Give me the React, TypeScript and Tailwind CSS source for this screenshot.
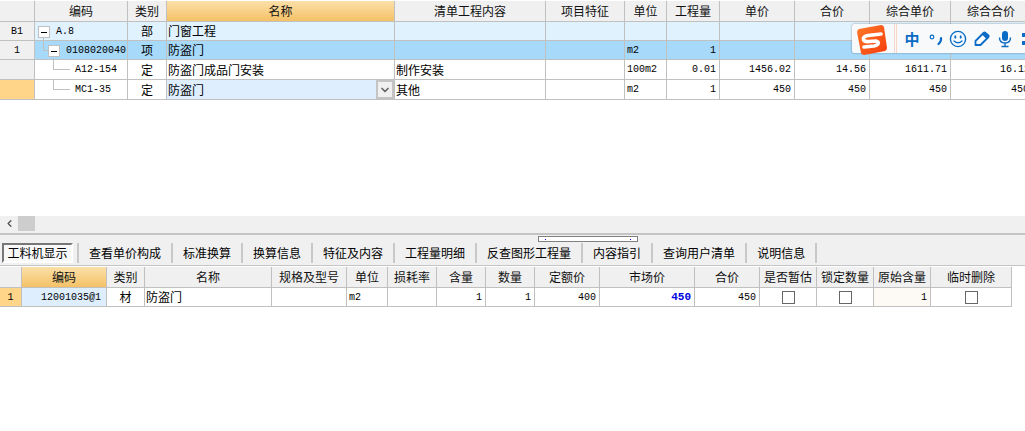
import React from "react";
import { ChevronDown, ChevronLeft } from "lucide-react";

const cjk = "font-['Noto_Sans_CJK_SC','Liberation_Sans',sans-serif]";
const topGrid = "grid grid-cols-[35px_93px_39px_228px_151px_79px_42px_53px_75px_75px_81px_81px]";
const botGrid = "grid grid-cols-[22px_85px_38px_127px_75px_41px_49px_49px_49px_65px_95px_65px_57px_57px_57px_81px]";
const line = "border-r border-b border-[#c0c0c0]";
const mono = "font-['Liberation_Mono',monospace] text-[10px]";

type CellProps = { children?: React.ReactNode; className?: string };
const Head = ({ children, className = "bg-[#f0f0f0]" }: CellProps) => (
  <div className={`${line} ${className} flex items-center justify-center text-[12px] text-[#111] overflow-hidden whitespace-nowrap`}>{children}</div>
);
const Text = ({ children, className = "" }: CellProps) => (
  <div className={`${line} ${className} flex items-center pl-px text-[12px] text-black overflow-hidden whitespace-nowrap`}>{children}</div>
);
const Tree = ({ children, className = "" }: CellProps) => (
  <div className={`${line} ${className} relative flex items-center pl-px text-[12px] text-black whitespace-nowrap`}>{children}</div>
);
const Center = ({ children, className = "" }: CellProps) => (
  <div className={`${line} ${className} flex items-center justify-center text-[12px] text-black overflow-hidden`}>{children}</div>
);
const Num = ({ children, className = "" }: CellProps) => (
  <div className={`${line} ${className} flex items-center justify-end pr-[3px] ${mono} text-black overflow-hidden whitespace-nowrap`}>{children}</div>
);
const Cut = ({ children, className = "" }: CellProps) => (
  <div className={`${line} ${className} flex items-center ${mono} text-black overflow-hidden whitespace-nowrap`}>{children}</div>
);
const Unit = ({ children, className = "" }: CellProps) => (
  <div className={`${line} ${className} flex items-center pl-[2px] ${mono} text-black overflow-hidden`}>{children}</div>
);
const Mono = ({ children, className = "" }: { children: React.ReactNode; className?: string }) => (
  <span className={`${mono} ${className}`}>{children}</span>
);
const Minus = ({ className = "" }: { className?: string }) => (
  <span className={`absolute w-[12px] h-[12px] bg-white border border-[#c0c0c0] flex items-center justify-center ${className}`}>
    <span className="w-[6px] h-px bg-black" />
  </span>
);

const tabs = ["查看单价构成", "标准换算", "换算信息", "特征及内容", "工程量明细", "反查图形工程量", "内容指引", "查询用户清单", "说明信息"];
const Box = () => <span className="w-[13px] h-[13px] border border-[#666] bg-white" />;

function ImeBar() {
  return (
    <div className="absolute left-[852px] top-[24px] w-[180px] h-[29px] bg-[#f7f9fb] rounded-[2px] shadow-[0_0_2px_rgba(0,0,0,0.45)] flex items-center">
      <svg width="32" height="32" viewBox="0 0 32 32" className="ml-[4px] mt-[2px] shrink-0">
        <defs>
          <linearGradient id="sg" x1="0" y1="0" x2="1" y2="1">
            <stop offset="0" stopColor="#ff7a2a" />
            <stop offset="1" stopColor="#f53c0c" />
          </linearGradient>
        </defs>
        <path d="M3 5 L25 1 Q27 1 28 3 L31 24 Q31 26 29 27 L8 31 Q6 31 5 29 L1 8 Q1 6 3 5Z" fill="url(#sg)" />
        <path d="M25 10 L12 11.5 Q6.5 12.5 7.5 15.5 Q8.5 18 13 17.5 L20 17 Q23 17.5 22 20 Q21 21.5 18 22 L8 23" fill="none" stroke="#fff" strokeWidth="3.6" strokeLinecap="round" strokeLinejoin="round" />
      </svg>
      <span className="ml-[6px] h-full w-[3px] border-x border-[#f8d5c6] shrink-0" />
      <span className="ml-[5px] w-[20px] text-center text-[15px] leading-none font-bold text-[#0a6cc4]">中</span>
      <svg width="16" height="16" viewBox="0 0 16 16" className="ml-[6px] shrink-0">
        <circle cx="4" cy="6" r="1.8" fill="none" stroke="#0a6cc4" strokeWidth="1.2" />
        <path d="M13 7 Q13.5 10.5 10.5 13" fill="none" stroke="#0a6cc4" strokeWidth="2.2" strokeLinecap="round" />
      </svg>
      <svg width="18" height="18" viewBox="0 0 18 18" className="ml-[5px] shrink-0">
        <circle cx="9" cy="9" r="7.6" fill="#f7fbff" stroke="#0a6cc4" strokeWidth="1.4" />
        <ellipse cx="6.3" cy="7" rx="1" ry="1.7" fill="#0a6cc4" />
        <ellipse cx="11.7" cy="7" rx="1" ry="1.7" fill="#0a6cc4" />
        <path d="M5 11 Q9 14.5 13 11" fill="none" stroke="#0a6cc4" strokeWidth="1.3" strokeLinecap="round" />
      </svg>
      <svg width="16" height="16" viewBox="0 0 16 16" className="ml-[7px] shrink-0">
        <path d="M1.5 10 L9.5 2 Q10.5 1 11.5 2 L14.5 4.5 Q15 5.5 14 6.5 L6.5 14 L1.5 14Z" fill="#fff" stroke="#0a6cc4" strokeWidth="1.8" strokeLinejoin="round" />
        <path d="M9.5 2 Q10.5 1 11.5 2 L14.5 4.5 Q15 5.5 14 6.5 L12.5 8 L8 3.5Z" fill="#0a6cc4" />
      </svg>
      <svg width="14" height="18" viewBox="0 0 14 18" className="ml-[8px] shrink-0">
        <rect x="4" y="1" width="6" height="10" rx="3" fill="#0a6cc4" />
        <path d="M1.5 7.5 Q1.5 13 7 13 Q12.5 13 12.5 7.5 M7 13 V16 M3.5 16.5 H10.5" fill="none" stroke="#0a6cc4" strokeWidth="1.4" />
      </svg>
      <span className="ml-[10px] w-[4px] h-[12px] border-y-[4px] border-[#0a6cc4] shrink-0" />
    </div>
  );
}

export default function App() {
  return (
    <div className={`relative w-[1025px] h-[431px] bg-white overflow-hidden ${cjk}`}>
      <div className="h-[215px] pt-px overflow-hidden">
        <div className={`${topGrid} w-[1100px] grid-rows-[21px_19px_19px_20px_20px]`}>
          <Head />
          <Head>编码</Head>
          <Head>类别</Head>
          <Head className="bg-gradient-to-b from-[#fbe0a8] to-[#f4c165]">名称</Head>
          <Head>清单工程内容</Head>
          <Head>项目特征</Head>
          <Head>单位</Head>
          <Head>工程量</Head>
          <Head>单价</Head>
          <Head>合价</Head>
          <Head>综合单价</Head>
          <Head>综合合价</Head>

          <Center className="bg-[#f0f0f0]"><Mono>B1</Mono></Center>
          <Tree className="bg-[#e0f2fe]"><Minus className="left-[3px] top-[4px]" /><Mono className="ml-[20px]">A.8</Mono></Tree>
          <Center className="bg-[#e0f2fe]">部</Center>
          <Text className="bg-[#e0f2fe]">门窗工程</Text>
          {[0, 1, 2, 3, 4, 5, 6, 7].map((i) => <Text key={i} className="bg-[#e0f2fe]" />)}

          <Center className="bg-[#f0f0f0]"><Mono>1</Mono></Center>
          <Tree className="bg-[#a6d9fa]">
            <span className="absolute left-[8px] top-[-3px] w-[6px] h-[13px] border-l border-b border-[#c0c0c0]" />
            <Minus className="left-[13px] top-[4px]" />
            <Mono className="ml-[30px]">0108020040</Mono>
          </Tree>
          <Center className="bg-[#a6d9fa]">项</Center>
          <Text className="bg-[#a6d9fa]">防盗门</Text>
          <Text className="bg-[#a6d9fa]" />
          <Text className="bg-[#a6d9fa]" />
          <Unit className="bg-[#a6d9fa]">m2</Unit>
          <Num className="bg-[#a6d9fa]">1</Num>
          {[0, 1, 2, 3].map((i) => <Text key={i} className="bg-[#a6d9fa]" />)}

          <Center className="bg-[#f0f0f0]" />
          <Tree>
            <span className="absolute left-[18px] top-[-2px] w-[17px] h-[12px] border-l border-b border-[#c0c0c0]" />
            <Mono className="ml-[39px]">A12-154</Mono>
          </Tree>
          <Center>定</Center>
          <Text>防盗门成品门安装</Text>
          <Text>制作安装</Text>
          <Text />
          <Unit>100m2</Unit>
          <Num>0.01</Num>
          <Num>1456.02</Num>
          <Num>14.56</Num>
          <Num>1611.71</Num>
          <Cut className="pl-[49px]">16.12</Cut>

          <Center className="bg-[#ffd58a]" />
          <Tree>
            <span className="absolute left-[18px] top-[-1px] w-[17px] h-[11px] border-l border-b border-[#c0c0c0]" />
            <Mono className="ml-[39px]">MC1-35</Mono>
          </Tree>
          <Center>定</Center>
          <Tree className="bg-[#deeeff]">
            防盗门
            <span className="absolute right-0 top-0 w-[18px] h-[19px] bg-[#f0f0f0] border-2 border-[#c4c4c4] flex items-center justify-center">
              <ChevronDown size={12} strokeWidth={3.5} className="text-[#666]" />
            </span>
          </Tree>
          <Text>其他</Text>
          <Text />
          <Unit>m2</Unit>
          <Num>1</Num>
          <Num>450</Num>
          <Num>450</Num>
          <Num>450</Num>
          <Cut className="pl-[60px]">450</Cut>
        </div>
      </div>

      <div className="h-[17px] mt-px bg-[#f0f0f0] flex items-start">
        <span className="w-[18px] h-[15px] flex items-center justify-center">
          <ChevronLeft size={11} strokeWidth={3} className="text-[#555]" />
        </span>
        <span className="w-[17px] h-[15px] bg-[#cdcdcd]" />
      </div>

      <div className="relative h-[33px] bg-[#f0f0f0] border-t-2 border-b border-[#c4c4c4] flex items-end pb-[2px] pl-[2px]">
        <span className="absolute left-[538px] top-px w-[100px] h-[6px] bg-white border border-[#808080] flex items-center justify-between px-[6px]">
          <span className="w-px h-px bg-[#0000e0]" />
          <span className="w-px h-px bg-[#0000e0]" />
        </span>
        <div className="h-[20px] flex items-center border-r-2 border-[#c8c8c8] pr-[4px]">
          <span className="h-[20px] w-[71px] flex items-center justify-center text-[12px] text-black bg-[#f8f8f8] border-2 border-t-[#777] border-l-[#777] border-r-white border-b-white">工料机显示</span>
        </div>
        {tabs.map((t) => (
          <div key={t} className="h-[20px] flex items-center border-r-2 border-[#c8c8c8] px-[10px] text-[12px] text-black whitespace-nowrap">
            {t}
          </div>
        ))}
      </div>

      <div className={`${botGrid} w-[1011px] grid-rows-[21px_19px] pt-px`}>
        <Head />
        <Head className="bg-gradient-to-b from-[#fbe0a8] to-[#f4c165]">编码</Head>
        {["类别", "名称", "规格及型号", "单位", "损耗率", "含量", "数量", "定额价", "市场价", "合价", "是否暂估", "锁定数量", "原始含量", "临时删除"].map((h) => (
          <Head key={h}>{h}</Head>
        ))}
        <Center className="bg-[#ffd58a]"><Mono>1</Mono></Center>
        <Num className="bg-[#deeeff]"><span className="mr-[2px]">12001035@1</span></Num>
        <Center>材</Center>
        <Text>防盗门</Text>
        <Text />
        <Unit>m2</Unit>
        <Text />
        <Num>1</Num>
        <Num>1</Num>
        <Num>400</Num>
        <Num><span className="text-[11px] font-bold text-[#0000e0]">450</span></Num>
        <Num>450</Num>
        <Center><Box /></Center>
        <Center><Box /></Center>
        <Num className="bg-[#fdf9f4]">1</Num>
        <Center><Box /></Center>
      </div>

      <ImeBar />
    </div>
  );
}
